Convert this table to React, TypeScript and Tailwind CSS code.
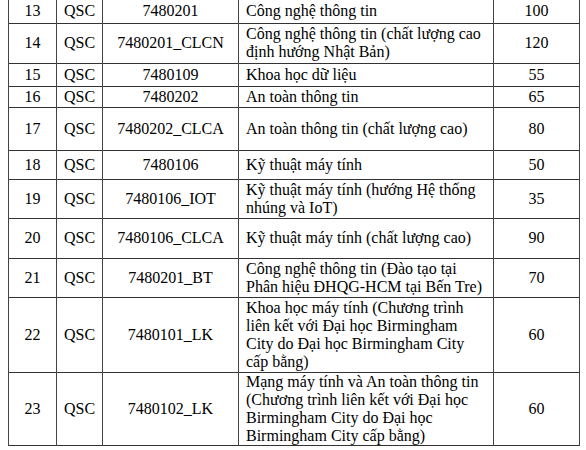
const ROWS: { no: string; code: string; name: string[]; quota: string; h: number }[] = [
  { no: '13', code: '7480201', name: ['Công nghệ thông tin'], quota: '100', h: 23 },
  { no: '14', code: '7480201_CLCN', name: ['Công nghệ thông tin (chất lượng cao', 'định hướng Nhật Bản)'], quota: '120', h: 40 },
  { no: '15', code: '7480109', name: ['Khoa học dữ liệu'], quota: '55', h: 23 },
  { no: '16', code: '7480202', name: ['An toàn thông tin'], quota: '65', h: 21 },
  { no: '17', code: '7480202_CLCA', name: ['An toàn thông tin (chất lượng cao)'], quota: '80', h: 43 },
  { no: '18', code: '7480106', name: ['Kỹ thuật máy tính'], quota: '50', h: 29 },
  { no: '19', code: '7480106_IOT', name: ['Kỹ thuật máy tính (hướng Hệ thống', 'nhúng và IoT)'], quota: '35', h: 39 },
  { no: '20', code: '7480106_CLCA', name: ['Kỹ thuật máy tính (chất lượng cao)'], quota: '90', h: 40 },
  { no: '21', code: '7480201_BT', name: ['Công nghệ thông tin (Đào tạo tại', 'Phân hiệu ĐHQG-HCM tại Bến Tre)'], quota: '70', h: 39 },
  {
    no: '22',
    code: '7480101_LK',
    name: ['Khoa học máy tính (Chương trình', 'liên kết với Đại học Birmingham', 'City do Đại học Birmingham City', 'cấp bằng)'],
    quota: '60',
    h: 75,
  },
  {
    no: '23',
    code: '7480102_LK',
    name: ['Mạng máy tính và An toàn thông tin', '(Chương trình liên kết với Đại học', 'Birmingham City do Đại học', 'Birmingham City cấp bằng)'],
    quota: '60',
    h: 73,
  },
]

export default function App() {
  return (
    <div className="h-[450px] w-[586px] overflow-hidden bg-white pl-2 font-serif text-[16px] leading-[18px] text-black">
      <table className="w-[571px] table-fixed border-collapse font-['Liberation_Serif']">
        <colgroup>
          <col className="w-[48px]" />
          <col className="w-[46px]" />
          <col className="w-[136px]" />
          <col className="w-[255px]" />
          <col className="w-[86px]" />
        </colgroup>
        <tbody>
          {ROWS.map((r, i) => (
            <tr key={r.no} style={{ height: r.h }} className={i === 0 ? '' : 'border-t border-[#333]'}>
              <td className="border-x border-[#444] p-0 text-center align-middle">{r.no}</td>
              <td className="border-x border-[#444] p-0 text-center align-middle">QSC</td>
              <td className="border-x border-[#444] p-0 text-center align-middle">{r.code}</td>
              <td className="border-x border-[#444] py-0 pl-[7px] pr-0 text-left align-middle whitespace-nowrap">
                {r.name.map((line) => (
                  <div key={line}>{line}</div>
                ))}
              </td>
              <td className="border-x border-[#444] p-0 text-center align-middle">{r.quota}</td>
            </tr>
          ))}
          <tr className="border-t border-[#333]" />
        </tbody>
      </table>
    </div>
  )
}
